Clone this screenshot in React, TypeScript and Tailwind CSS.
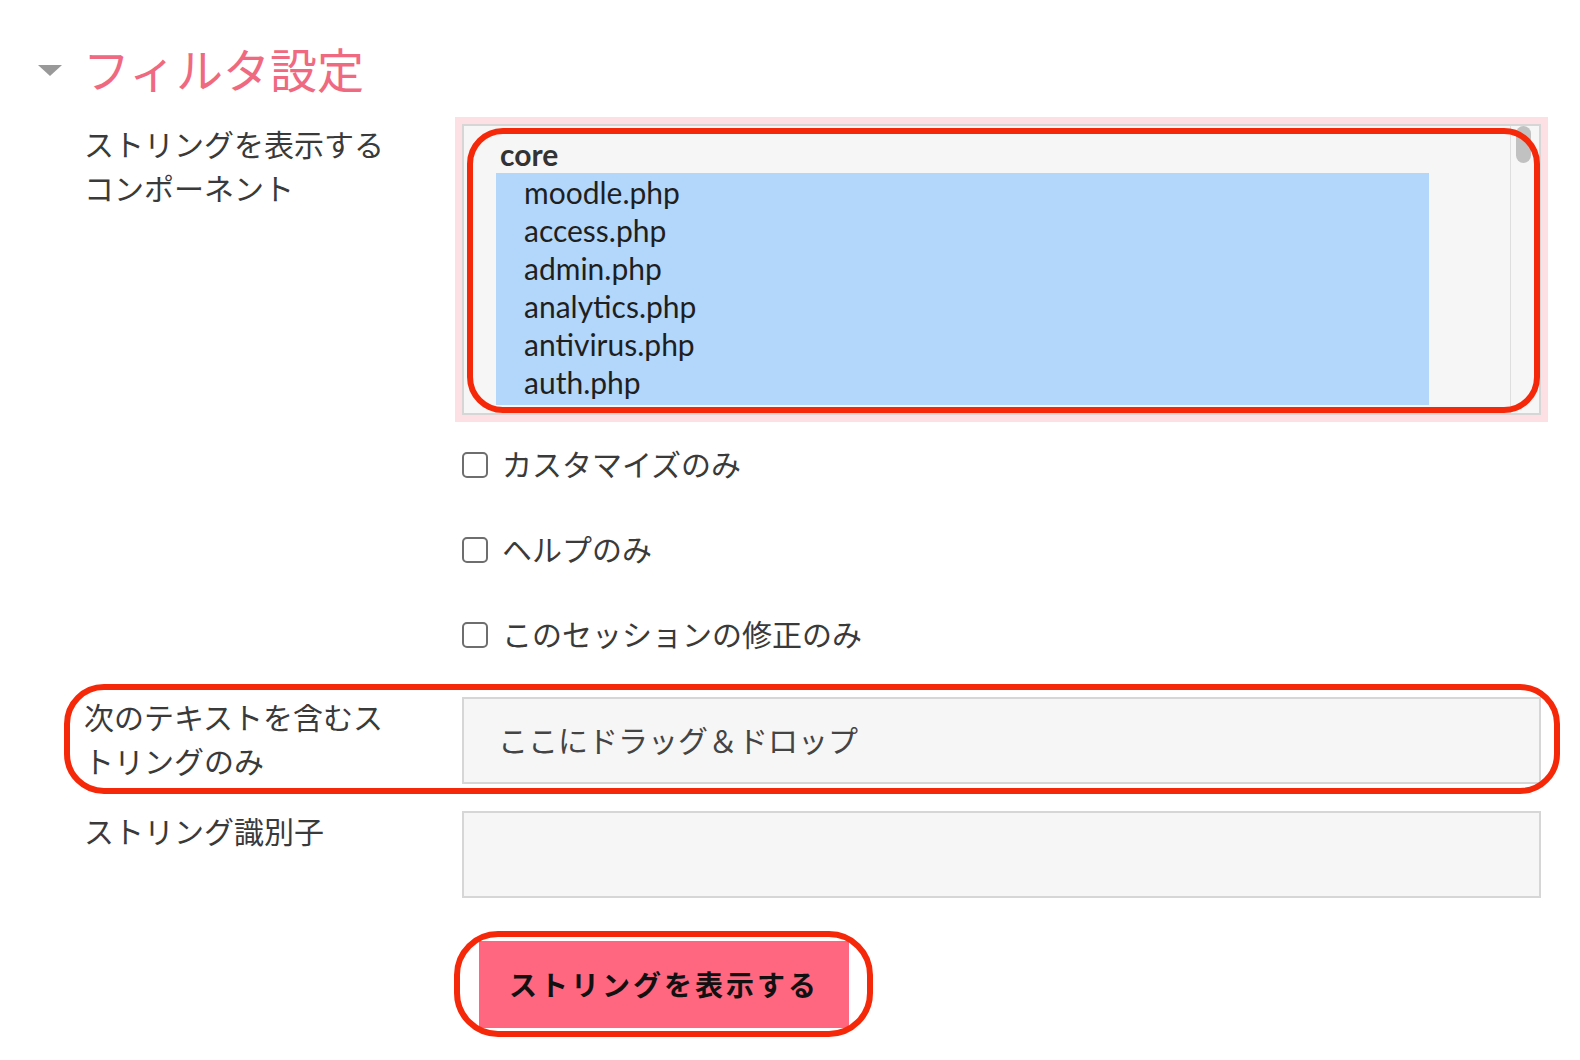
import React from "react";

const options = [
  "moodle.php",
  "access.php",
  "admin.php",
  "analytics.php",
  "antivirus.php",
  "auth.php",
];

const checkboxes = ["カスタマイズのみ", "ヘルプのみ", "このセッションの修正のみ"];

const App: React.FC = () => {
  return (
    <div className="min-h-screen bg-white font-['Lato','Noto_Sans_CJK_JP',sans-serif] text-[#3a3a3a]">
      {/* section header */}
      <div className="flex items-center pl-[38px] pt-[47px]">
        <div className="h-0 w-0 border-x-[12px] border-t-[11px] border-x-transparent border-t-[#999999]" />
        <h3 className="ml-[21px] text-[47px] leading-none text-[#ef6a80]">フィルタ設定</h3>
      </div>

      <div className="pl-[84px] pt-[30px]">
        {/* components */}
        <div className="grid w-[1457px] grid-cols-[378px_1079px]">
          <div className="-mt-[2px] text-[30px] leading-[44px]">
            ストリングを表示する
            <br />
            コンポーネント
          </div>
          <div>
            <div className="relative h-[291px] border-2 border-[#d6d6d6] bg-[#f6f6f6] ring-[7px] ring-[#fde0e4]">
              <div className="flex h-full overflow-hidden">
                <div className="flex-1 pt-[9px]">
                  <div className="pl-[36px] text-[30px] font-bold leading-[38px] text-[#333333]">core</div>
                  <div className="ml-[32px] w-[933px] bg-[#b3d7fb] pb-[4px]">
                    {options.map((o) => (
                      <div key={o} className="pl-[28px] text-[30px] leading-[38px] text-[#1f1f1f]">
                        {o}
                      </div>
                    ))}
                  </div>
                  <div className="ml-[32px] pl-[28px] text-[30px] leading-[38px] text-[#1f1f1f]">availability.php</div>
                </div>
                <div className="w-[29px] border-l border-[#dedede] pl-[5px]">
                  <div className="h-[37px] w-[15px] rounded-full bg-[#c1c1c1]" />
                </div>
              </div>
              <div className="pointer-events-none absolute bottom-[0px] left-[3px] right-[-1px] top-[2px] rounded-[36px] border-[6px] border-[#f5290a]" />
            </div>

            <div className="mt-[27px] flex flex-col gap-[40px]">
              {checkboxes.map((c) => (
                <label key={c} className="flex items-center text-[30px] leading-[45px]">
                  <span className="h-[26px] w-[26px] rounded-[5px] border-2 border-[#6e6e6e] bg-white" />
                  <span className="ml-[14px]">{c}</span>
                </label>
              ))}
            </div>
          </div>
        </div>

        {/* text filter */}
        <div className="relative mt-[40px] grid h-[90px] w-[1457px] grid-cols-[378px_1079px]">
          <div className="-mt-[2px] text-[30px] leading-[44px]">
            次のテキストを含むス
            <br />
            トリングのみ
          </div>
          <input
            placeholder="ここにドラッグ＆ドロップ"
            className="h-[87px] border-2 border-[#d6d6d6] bg-[#f6f6f6] pb-[2px] pl-[34px] text-[30px] outline-none placeholder:text-[#444444]"
          />
          <div className="pointer-events-none absolute -bottom-[7px] -left-[20px] -right-[19px] -top-[13px] rounded-[40px] border-[6px] border-[#f5290a]" />
        </div>

        {/* string id */}
        <div className="mt-[24px] grid w-[1457px] grid-cols-[378px_1079px]">
          <div className="-mt-[2px] text-[30px] leading-[44px]">ストリング識別子</div>
          <input className="h-[87px] border-2 border-[#d6d6d6] bg-[#f6f6f6] pl-[34px] text-[30px] outline-none" />
        </div>

        <div className="mt-[43px] grid w-[1457px] grid-cols-[378px_1079px]">
          <div />
          <div className="relative ml-[17px] w-[370px]">
            <button className="h-[87px] w-[370px] bg-[#ff6680] text-[28px] font-bold tracking-[3px] text-[#111111]">
              ストリングを表示する
            </button>
            <div className="pointer-events-none absolute -bottom-[9px] -left-[25px] -right-[24px] -top-[10px] rounded-[44px] border-[6px] border-[#f5290a]" />
          </div>
        </div>
      </div>
    </div>
  );
};

export default App;
